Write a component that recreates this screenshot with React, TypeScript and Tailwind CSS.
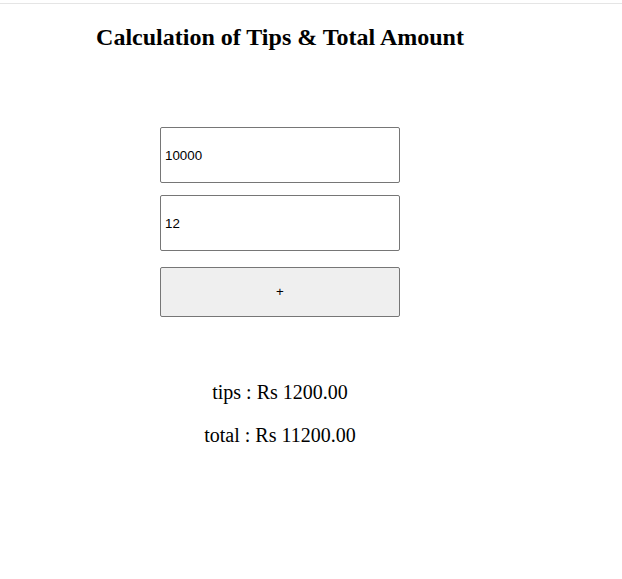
import React from "react";

export default function App() {
  return (
    <div className="min-h-[579px] w-[622px] bg-white" style={{ fontFamily: '"Liberation Serif", serif' }}>
      <div className="h-[3px]" />
      <div className="h-px bg-[#e5e5e5]" />
      <div className="w-[560px] flex flex-col items-center">
        <h1 className="mt-[19px] text-[24px] font-bold leading-[28px] text-black">
          Calculation of Tips &amp; Total Amount
        </h1>
        <div className="mt-[76px] flex flex-col items-center gap-[12px]">
          <input
            defaultValue="10000"
            className="h-[56px] w-[240px] rounded-[2px] border border-[#767676] px-[4px] text-[13.33px] text-black outline-none"
            style={{ fontFamily: '"Liberation Sans", Arial, sans-serif' }}
          />
          <input
            defaultValue="12"
            className="h-[56px] w-[240px] rounded-[2px] border border-[#767676] px-[4px] text-[13.33px] text-black outline-none"
            style={{ fontFamily: '"Liberation Sans", Arial, sans-serif' }}
          />
          <button
            className="mt-[4px] h-[50px] w-[240px] rounded-[2px] border border-[#767676] bg-[#efefef] text-[13.33px] text-black"
            style={{ fontFamily: '"Liberation Sans", Arial, sans-serif' }}
          >
            +
          </button>
        </div>
        <div className="mt-[64px] flex flex-col items-center gap-[20px] text-[20px] leading-[23px] text-black">
          <p>tips : Rs 1200.00</p>
          <p>total : Rs 11200.00</p>
        </div>
      </div>
    </div>
  );
}
